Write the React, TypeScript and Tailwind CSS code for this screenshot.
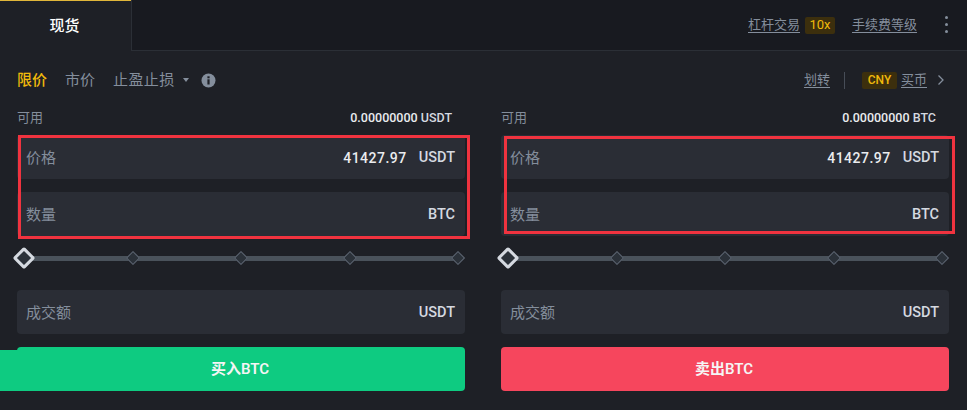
const fontStack = "font-['Roboto','Noto_Sans_CJK_SC',sans-serif]"

const FormField = ({ label, value, unit }: { label: string; value?: string; unit: string }) => (
  <div className="flex h-[44px] items-center rounded-[4px] bg-[#2a2d35] pl-[10px] pr-[10px] pt-[2px]">
    <span className="-ml-px text-[15px] text-[#848e9c]">{label}</span>
    {value && <span className="ml-auto text-[14px] font-medium tracking-[0.5px] text-[#eaecef]">{value}</span>}
    <span className={`${value ? 'ml-[12px]' : 'ml-auto'} text-[14.5px] font-medium text-[#d5d9e0]`}>{unit}</span>
  </div>
)

const Slider = () => (
  <div className="relative mt-[11px] flex h-[22px] items-center pr-[2px]">
    <div className="absolute left-[12px] right-[6px] top-[9px] h-[5px] bg-[#4a525b]" />
    <div className="relative z-10 size-[16px] -translate-x-px rotate-45 rounded-[2px] border-[3px] border-[#d5d9e0] bg-[#2b3139]" />
    <div className="relative z-10 ml-auto flex w-[335px] items-center justify-between">
      {[0, 1, 2, 3].map((i) => (
        <div key={i} className="size-[10px] rotate-45 border border-[#5e6673] bg-[#2b3139]" />
      ))}
    </div>
  </div>
)

const OrderColumn = ({
  balance,
  unit,
  button,
  color,
  bleed,
}: {
  balance: string
  unit: string
  button: string
  color: string
  bleed?: boolean
}) => (
  <div className="relative flex w-[448px] flex-col">
    <div className="flex h-[20px] items-center pr-[13px] text-[13px] text-[#848e9c]">
      <span>可用</span>
      <span className="ml-auto text-[12.5px] font-medium text-[#eaecef]">
        {balance} <span className="text-[#d5d9e0]">{unit}</span>
      </span>
    </div>
    <div className="mt-[7px] flex flex-col gap-[13px]">
      <FormField label="价格" value="41427.97" unit="USDT" />
      <FormField label="数量" unit="BTC" />
    </div>
    <Slider />
    <div className="mt-[21px]">
      <FormField label="成交额" unit="USDT" />
    </div>
    <button className={`relative mt-[13px] h-[44px] rounded-[4px] pr-[2px] pt-[1px] text-[15px] font-semibold text-[#f5f5f5] ${color}`}>
      {bleed && <span className="absolute bottom-0 left-[-17px] top-[3px] w-[24px] bg-[#0ecb81]" />}
      {button}
    </button>
  </div>
)

export default function App() {
  return (
    <div className={`relative h-[410px] w-[967px] overflow-hidden bg-[#1e2026] ${fontStack}`}>
      {/* top bar */}
      <div className="flex h-[51px] bg-[#181a20]">
        <div className="flex w-[131px] items-center justify-center border-t border-[#e0b63a] bg-[#1e2026] pr-[2px] text-[15px] font-medium text-white">
          现货
        </div>
        <div className="flex flex-1 items-center border-b border-l border-[#2b2f36] pl-[616px] text-[13px] text-[#848e9c]">
          <span className="underline underline-offset-[3px]">杠杆交易</span>
          <span className="ml-[5px] flex h-[17px] w-[30px] items-center justify-center rounded-[2px] bg-[#3c2f0d] text-[13px] text-[#f0b90b]">
            10x
          </span>
          <span className="ml-[17px] underline underline-offset-[3px]">手续费等级</span>
          <div className="ml-[28px] flex -translate-y-[1px] flex-col gap-[4px]">
            <span className="size-[3px] rounded-full bg-[#848e9c]" />
            <span className="size-[3px] rounded-full bg-[#848e9c]" />
            <span className="size-[3px] rounded-full bg-[#848e9c]" />
          </div>
        </div>
      </div>

      {/* order type row */}
      <div className="flex h-[58px] items-center pl-[17px] pr-[22px] text-[15px] text-[#848e9c]">
        <span className="font-medium text-[#f0b90b]">限价</span>
        <span className="ml-[18px]">市价</span>
        <span className="ml-[18px] tracking-[0.4px]">止盈止损</span>
        <span className="ml-[8px] size-0 border-x-[3px] border-t-[4px] border-x-transparent border-t-[#848e9c]" />
        <svg className="ml-[12px]" width="15" height="15" viewBox="0 0 15 15">
          <circle cx="7.5" cy="7.5" r="7" fill="#848e9c" />
          <rect x="6.4" y="6.3" width="2.2" height="5.2" fill="#1e2026" />
          <rect x="6.4" y="3.3" width="2.2" height="2" fill="#1e2026" />
        </svg>
        <span className="ml-auto text-[13px] underline underline-offset-[3px]">划转</span>
        <span className="ml-[14px] h-[17px] w-px bg-[#474d57]" />
        <span className="ml-[17px] flex h-[17px] w-[35px] items-center justify-center rounded-[2px] bg-[#3c2f0d] text-[12px] font-medium text-[#f0b90b]">
          CNY
        </span>
        <span className="ml-[4px] text-[13px] underline underline-offset-[3px]">买币</span>
        <svg className="ml-[10px]" width="8" height="12" viewBox="0 0 8 12" fill="none" stroke="#848e9c" strokeWidth="1.3">
          <path d="M1.5 1.5 6 6l-4.5 4.5" />
        </svg>
      </div>

      {/* buy / sell forms */}
      <div className="-mt-px flex gap-[36px] pl-[17px]">
        <OrderColumn balance="0.00000000" unit="USDT" button="买入BTC" color="bg-[#0ecb81]" bleed />
        <OrderColumn balance="0.00000000" unit="BTC" button="卖出BTC" color="bg-[#f6465d]" />
      </div>

      {/* red annotation boxes drawn over the screenshot */}
      <div className="absolute left-[18px] top-[135px] h-[104px] w-[452px] border-[3px] border-[#f0333f]" />
      <div className="absolute left-[504px] top-[136px] h-[98px] w-[451px] border-[3px] border-[#f0333f]" />
    </div>
  )
}
